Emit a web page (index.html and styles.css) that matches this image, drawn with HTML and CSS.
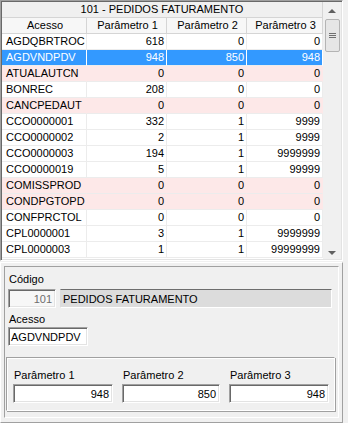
FILE: index.html
```html
<!DOCTYPE html>
<html lang="pt">
<head>
    <meta charset="UTF-8">
    <title>Pedidos Faturamento</title>
    <link rel="stylesheet" href="styles.css">
</head>
<body>
    <div class="grid">
        <div class="grid-body">
            <div class="title-row">101 - PEDIDOS FATURAMENTO</div>
            <div class="row head">
                <div class="cell c1">Acesso</div>
                <div class="cell c2">Parâmetro 1</div>
                <div class="cell c3">Parâmetro 2</div>
                <div class="cell c4">Parâmetro 3</div>
            </div>
            <div class="row"><div class="cell c1">AGDQBRTROC</div><div class="cell c2 num">618</div><div class="cell c3 num">0</div><div class="cell c4 num">0</div></div>
            <div class="row selected"><div class="cell c1">AGDVNDPDV</div><div class="cell c2 num">948</div><div class="cell c3 num">850</div><div class="cell c4 num">948</div></div>
            <div class="row pink"><div class="cell c1">ATUALAUTCN</div><div class="cell c2 num">0</div><div class="cell c3 num">0</div><div class="cell c4 num">0</div></div>
            <div class="row"><div class="cell c1">BONREC</div><div class="cell c2 num">208</div><div class="cell c3 num">0</div><div class="cell c4 num">0</div></div>
            <div class="row pink"><div class="cell c1">CANCPEDAUT</div><div class="cell c2 num">0</div><div class="cell c3 num">0</div><div class="cell c4 num">0</div></div>
            <div class="row"><div class="cell c1">CCO0000001</div><div class="cell c2 num">332</div><div class="cell c3 num">1</div><div class="cell c4 num">9999</div></div>
            <div class="row"><div class="cell c1">CCO0000002</div><div class="cell c2 num">2</div><div class="cell c3 num">1</div><div class="cell c4 num">9999</div></div>
            <div class="row"><div class="cell c1">CCO0000003</div><div class="cell c2 num">194</div><div class="cell c3 num">1</div><div class="cell c4 num">9999999</div></div>
            <div class="row"><div class="cell c1">CCO0000019</div><div class="cell c2 num">5</div><div class="cell c3 num">1</div><div class="cell c4 num">99999</div></div>
            <div class="row pink"><div class="cell c1">COMISSPROD</div><div class="cell c2 num">0</div><div class="cell c3 num">0</div><div class="cell c4 num">0</div></div>
            <div class="row pink"><div class="cell c1">CONDPGTOPD</div><div class="cell c2 num">0</div><div class="cell c3 num">0</div><div class="cell c4 num">0</div></div>
            <div class="row"><div class="cell c1">CONFPRCTOL</div><div class="cell c2 num">0</div><div class="cell c3 num">0</div><div class="cell c4 num">0</div></div>
            <div class="row"><div class="cell c1">CPL0000001</div><div class="cell c2 num">3</div><div class="cell c3 num">1</div><div class="cell c4 num">9999999</div></div>
            <div class="row"><div class="cell c1">CPL0000003</div><div class="cell c2 num">1</div><div class="cell c3 num">1</div><div class="cell c4 num">99999999</div></div>
        </div>
        <div class="scrollbar">
            <div class="arrow up"></div>
            <div class="thumb"><span></span><span></span><span></span></div>
            <div class="track"></div>
            <div class="arrow down"></div>
        </div>
    </div>

    <div class="bottom">
        <div class="frame">
            <div class="label">Código</div>
            <div class="line">
                <div class="edit code">101</div>
                <div class="edit desc">PEDIDOS FATURAMENTO</div>
            </div>
            <div class="label">Acesso</div>
            <div class="edit acesso">AGDVNDPDV</div>
            <div class="params">
                <div class="param p1">
                    <div class="label">Parâmetro 1</div>
                    <div class="edit num">948</div>
                </div>
                <div class="param p2">
                    <div class="label">Parâmetro 2</div>
                    <div class="edit num">850</div>
                </div>
                <div class="param p3">
                    <div class="label">Parâmetro 3</div>
                    <div class="edit num">948</div>
                </div>
            </div>
        </div>
    </div>
</body>
</html>
```

FILE: styles.css
```css
body {
    margin: 0;
    width: 348px;
    height: 423px;
    background: #f0f0f0;
    font-family: 'Liberation Sans', Arial, sans-serif;
    font-size: 11px;
    color: #000;
    overflow: hidden;
}
.grid {
    display: flex;
    width: 343px;
    height: 261px;
    box-sizing: border-box;
    border: 1px solid;
    border-color: #a0a0a0 #fff #fff #a0a0a0;
    box-shadow: inset 1px 1px #696969, inset -1px -1px #e3e3e3;
    padding: 1px;
    background: #fff;
}
.grid-body {
    width: 321px;
    background: #fff;
}
.title-row {
    height: 15px;
    line-height: 15px;
    text-align: center;
    background: #f0f0f0;
    border-bottom: 1px solid #d5d5d5;
    border-right: 1px solid #d5d5d5;
}
.row {
    display: flex;
    height: 16px;
}
.cell {
    box-sizing: border-box;
    height: 16px;
    line-height: 15px;
    padding: 0 2px 0 4px;
    border-right: 1px solid #ececec;
    border-bottom: 1px solid #ececec;
    white-space: nowrap;
    overflow: hidden;
}
.c1 { width: 85px; }
.c2 { width: 80px; }
.c3 { width: 80px; }
.c4 { width: 76px; }
.num {
    text-align: right;
}
.head .cell {
    text-align: center;
    background: #f7f7f7;
    border-color: #d5d5d5;
}
.selected .cell {
    background: #3399ff;
    color: #fff;
    border-right-color: #fff;
}
.pink .cell {
    background: #fde8e8;
    border-right-color: #fde8e8;
}
.scrollbar {
    width: 18px;
    display: flex;
    flex-direction: column;
    align-items: center;
    background: #f0f0f0;
}
.arrow {
    width: 0;
    height: 0;
    border-left: 4px solid transparent;
    border-right: 4px solid transparent;
}
.arrow.up {
    margin-top: 7px;
    border-bottom: 4px solid #606060;
}
.arrow.down {
    margin-bottom: 4px;
    border-top: 4px solid #606060;
}
.thumb {
    box-sizing: border-box;
    width: 15px;
    height: 33px;
    margin-top: 6px;
    border: 1px solid #b4b4b4;
    border-radius: 2px;
    background: #e6e6e6;
    display: flex;
    flex-direction: column;
    align-items: center;
    justify-content: center;
    gap: 1px;
}
.thumb span {
    width: 7px;
    height: 1px;
    background: #707070;
}
.track {
    flex: 1;
}
.bottom {
    width: 343px;
    height: 161px;
    margin-top: 1px;
    box-sizing: border-box;
    border: 1px solid;
    border-color: #fff #a0a0a0 #a0a0a0 #fff;
    padding: 3px;
}
.frame {
    height: 152px;
    box-sizing: border-box;
    border: 1px solid;
    border-color: #a0a0a0 #fff #fff #a0a0a0;
    padding: 6px 4px 0 3px;
}
.label {
    height: 13px;
    line-height: 13px;
    padding-left: 1px;
}
.line {
    display: flex;
    gap: 4px;
    margin-top: 3px;
}
.edit {
    box-sizing: border-box;
    height: 19px;
    line-height: 16px;
    padding: 1px 3px 0 2px;
    background: #fff;
    border: 1px solid;
    border-color: #a0a0a0 #fff #fff #a0a0a0;
    box-shadow: inset 1px 1px #696969, inset -1px -1px #e3e3e3;
    white-space: nowrap;
    overflow: hidden;
}
.edit.code {
    width: 48px;
    text-align: right;
    color: #6d6d6d;
    background: #f7f7f7;
}
.edit.desc {
    width: 272px;
    background: #dcdcdc;
    border-color: #6d6d6d #fff #fff #dcdcdc;
    box-shadow: none;
}
.line + .label {
    margin-top: 5px;
}
.edit.acesso {
    width: 80px;
    margin-top: 1px;
}
.params {
    display: flex;
    gap: 9px;
    margin: 11px -1px 0 -2px;
    padding: 11px 4px 7px 6px;
    border: 1px solid;
    border-color: #a0a0a0 #fff #fff #a0a0a0;
    box-shadow: 1px 1px #a0a0a0, inset 1px 1px #fff;
}
.param .label {
    margin-bottom: 2px;
}
.p1 .edit, .p3 .edit {
    width: 100px;
}
.p2 .edit {
    width: 98px;
}
```
